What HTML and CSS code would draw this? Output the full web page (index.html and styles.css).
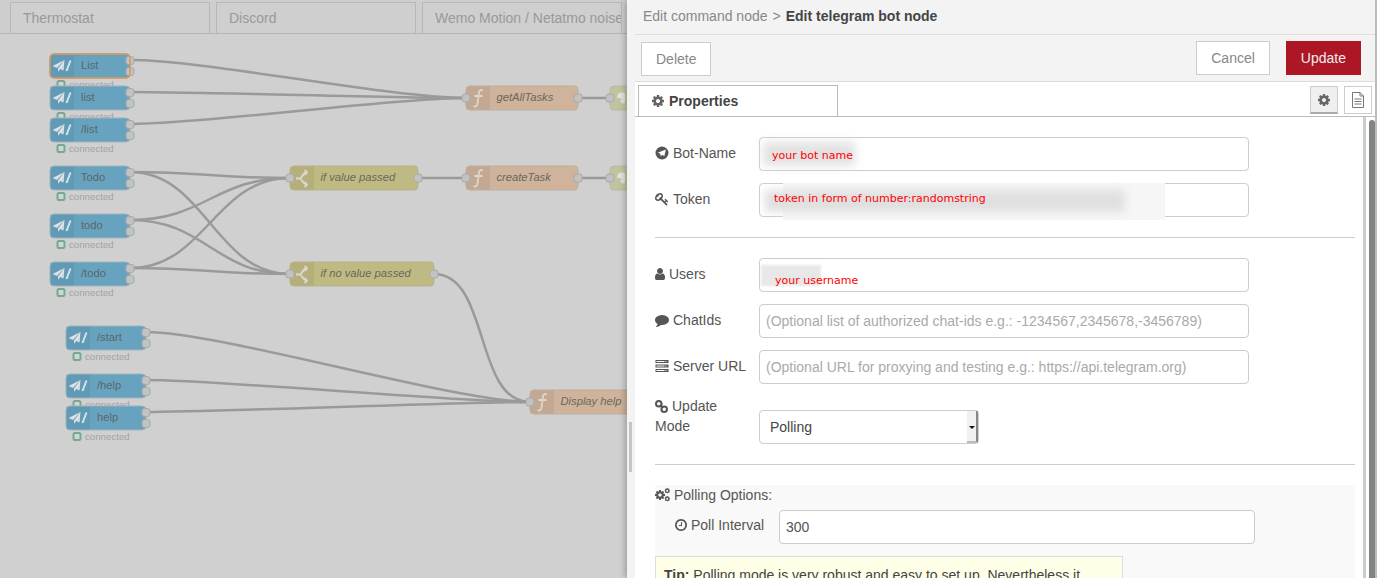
FILE: index.html
```html
<!DOCTYPE html>
<html lang="en">
<head>
  <meta charset="UTF-8">
  <meta name="viewport" content="width=device-width, initial-scale=1.0">
  <title>Edit telegram bot node</title>
  <link rel="stylesheet" href="styles.css">
</head>
<body>

<div class="workspace">
  <div class="flow-tabs">
    <div class="flow-tab">Thermostat</div>
    <div class="flow-tab">Discord</div>
    <div class="flow-tab">Wemo Motion / Netatmo noise</div>
  </div>

  <svg class="flow" width="627" height="544" viewBox="0 34 627 544">
    <defs>
      <g id="tg-node">
        <rect class="node-box tg" x="0" y="0" width="80" height="24" rx="4"/>
        <path class="node-icon-bg" d="M4 .5H24V23.500H4A3.500 3.500 0 0 1 .5 20V4A3.500 3.500 0 0 1 4 .5Z"/>
        <path class="tg-plane" d="M14.500 6 2.500 12l4.500 2zM14.500 6 8 14.500v3l2.500-2.500 3 1.500z"/>
        <path class="tg-slash" d="M20.500 6.500 16.500 17"/>
        <rect class="port" x="76" y="2.500" width="8" height="8" rx="2.500"/>
        <rect class="port" x="76" y="13.500" width="8" height="8" rx="2.500"/>
        <rect class="status-dot" x="7.500" y="27" width="7" height="7" rx="1.500"/>
        <text class="status-text" x="19" y="34">connected</text>
      </g>
      <g id="fn-icon">
        <path class="node-icon-bg" d="M4 .5H24V23.500H4A3.500 3.500 0 0 1 .5 20V4A3.500 3.500 0 0 1 4 .5Z"/>
        <path class="fn-glyph" d="M17 4.500C13.500 3 13 5.500 12.700 8.500L11.500 17.500C11.200 20.500 9.500 21 7.500 20M8.500 10H16.500"/>
      </g>
      <g id="switch-icon">
        <path class="node-icon-bg" d="M4 .5H24V23.500H4A3.500 3.500 0 0 1 .5 20V4A3.500 3.500 0 0 1 4 .5Z"/>
        <path class="fn-glyph" d="M6 12.500H10C12 12.500 12 7 16.500 6.500M10 12.500C12 12.500 12 17.500 16.500 18.500M14.500 4 17 6.500 14.500 9M14.500 16 17 18.500 14.500 21"/>
      </g>
      <path id="http-icon" class="http-globe" d="M8 8C10 6 13 6 15 7.500V17C13 18 11 17 10 15L12 13 9 12H7Z"/>
    </defs>

    <g class="wires">
      <path d="M130 60C205 60 391 98 466 98"/>
      <path d="M130 92C205 92 391 98 466 98"/>
      <path d="M130 124C205 124 391 98 466 98"/>
      <path d="M130 172C205 172 215 178 290 178"/>
      <path d="M130 172C205 172 215 274 290 274"/>
      <path d="M130 220C205 220 215 178 290 178"/>
      <path d="M130 220C205 220 215 274 290 274"/>
      <path d="M130 268C205 268 215 178 290 178"/>
      <path d="M130 268C205 268 215 274 290 274"/>
      <path d="M418 178H466"/>
      <path d="M578 178H610"/>
      <path d="M578 98H610"/>
      <path d="M434 274C490 274 474 402 530 402"/>
      <path d="M146 332C221 332 455 402 530 402"/>
      <path d="M146 380C221 380 455 402 530 402"/>
      <path d="M146 412C221 412 455 402 530 402"/>
    </g>

    <g transform="translate(50 54)">
      <use href="#tg-node"/>
      <rect class="node-selected" x="0" y="0" width="80" height="24" rx="4"/>
      <text class="node-label" x="31" y="15">List</text>
    </g>
    <g transform="translate(50 86)"><use href="#tg-node"/><text class="node-label" x="31" y="15">list</text></g>
    <g transform="translate(50 118)"><use href="#tg-node"/><text class="node-label" x="31" y="15">/list</text></g>
    <g transform="translate(50 166)"><use href="#tg-node"/><text class="node-label" x="31" y="15">Todo</text></g>
    <g transform="translate(50 214)"><use href="#tg-node"/><text class="node-label" x="31" y="15">todo</text></g>
    <g transform="translate(50 262)"><use href="#tg-node"/><text class="node-label" x="31" y="15">/todo</text></g>
    <g transform="translate(66 326)"><use href="#tg-node"/><text class="node-label" x="31" y="15">/start</text></g>
    <g transform="translate(66 374)"><use href="#tg-node"/><text class="node-label" x="31" y="15">/help</text></g>
    <g transform="translate(66 406)"><use href="#tg-node"/><text class="node-label" x="31" y="15">help</text></g>

    <g transform="translate(290 166)">
      <rect class="node-box sw" x="0" y="0" width="128" height="24" rx="4"/>
      <use href="#switch-icon"/>
      <rect class="port" x="-4" y="8" width="8" height="8" rx="2.500"/>
      <rect class="port" x="124" y="8" width="8" height="8" rx="2.500"/>
      <text class="node-label italic" x="30.500" y="15">if value passed</text>
    </g>
    <g transform="translate(290 262)">
      <rect class="node-box sw" x="0" y="0" width="144" height="24" rx="4"/>
      <use href="#switch-icon"/>
      <rect class="port" x="-4" y="8" width="8" height="8" rx="2.500"/>
      <rect class="port" x="140" y="8" width="8" height="8" rx="2.500"/>
      <text class="node-label italic" x="30.500" y="15">if no value passed</text>
    </g>
    <g transform="translate(466 86)">
      <rect class="node-box fn" x="0" y="0" width="112" height="24" rx="4"/>
      <use href="#fn-icon"/>
      <rect class="port" x="-4" y="8" width="8" height="8" rx="2.500"/>
      <rect class="port" x="108" y="8" width="8" height="8" rx="2.500"/>
      <text class="node-label italic" x="30.500" y="15">getAllTasks</text>
    </g>
    <g transform="translate(466 166)">
      <rect class="node-box fn" x="0" y="0" width="112" height="24" rx="4"/>
      <use href="#fn-icon"/>
      <rect class="port" x="-4" y="8" width="8" height="8" rx="2.500"/>
      <rect class="port" x="108" y="8" width="8" height="8" rx="2.500"/>
      <text class="node-label italic" x="30.500" y="15">createTask</text>
    </g>
    <g transform="translate(530 390)">
      <rect class="node-box fn" x="0" y="0" width="130" height="24" rx="4"/>
      <use href="#fn-icon"/>
      <rect class="port" x="-4" y="8" width="8" height="8" rx="2.500"/>
      <text class="node-label italic" x="30.500" y="15">Display help</text>
    </g>
    <g transform="translate(610 86)">
      <rect class="node-box http" x="0" y="0" width="60" height="24" rx="4"/>
      <use href="#http-icon"/>
      <rect class="port" x="-4" y="8" width="8" height="8" rx="2.500"/>
    </g>
    <g transform="translate(610 166)">
      <rect class="node-box http" x="0" y="0" width="60" height="24" rx="4"/>
      <use href="#http-icon"/>
      <rect class="port" x="-4" y="8" width="8" height="8" rx="2.500"/>
    </g>
  </svg>
</div>

<div class="tray">
  <div class="tray-handle"><div class="tray-grip"></div></div>
  <div class="tray-main">
    <div class="breadcrumb">
      <span class="crumb">Edit command node</span>
      <span class="crumb-sep">&gt;</span>
      <b class="crumb-current">Edit telegram bot node</b>
    </div>

    <div class="tray-toolbar">
      <button class="btn btn-delete">Delete</button>
      <div class="toolbar-right">
        <button class="btn">Cancel</button>
        <button class="btn btn-primary">Update</button>
      </div>
    </div>

    <div class="tabbar">
      <div class="tab">
        <svg class="tab-icon" viewBox="0 0 1792 1792"><use href="#i-cog"/></svg>
        Properties
      </div>
      <div class="tab-actions">
        <div class="tab-btn active">
          <svg class="tab-btn-icon" viewBox="0 0 1792 1792">
            <path id="i-cog" d="M1152 896q0-106-75-181t-181-75-181 75-75 181 75 181 181 75 181-75 75-181zm512-109v222q0 12-8 23t-20 13l-185 28q-19 54-39 91 35 50 107 138 10 12 10 25t-9 23q-27 37-99 108t-94 71q-12 0-26-9l-138-108q-44 23-91 38-16 136-29 186-7 28-36 28h-222q-14 0-24.500-8.500t-11.500-21.500l-28-184q-49-16-90-37l-141 107q-10 9-25 9-14 0-25-11-126-114-165-168-7-10-7-23 0-12 8-23 15-21 51-66.500t54-70.500q-27-50-41-99l-183-27q-13-2-21-12.500t-8-23.500v-222q0-12 8-23t19-13l186-28q14-46 39-92-40-57-107-138-10-12-10-24 0-10 9-23 26-36 98.500-107.500t94.500-71.500q13 0 26 10l138 107q44-23 91-38 16-136 29-186 7-28 36-28h222q14 0 24.500 8.500t11.500 21.500l28 184q49 16 90 37l142-107q9-9 24-9 13 0 25 10 129 119 165 170 7 8 7 22 0 12-8 23-15 21-51 66.500t-54 70.500q26 50 41 98l183 28q13 2 21 12.500t8 23.500z"/>
          </svg>
        </div>
        <div class="tab-btn">
          <svg class="tab-btn-doc" viewBox="0 0 14 16">
            <path d="M1.500 .5H9L12.500 4V15.500H1.500ZM9 .5V4H12.500M3.500 7H10.500M3.500 9.500H10.500M3.500 12H10.500"/>
          </svg>
        </div>
      </div>
    </div>

    <div class="tray-body">
      <div class="form">
        <div class="row">
          <label class="row-label">
            <svg class="ic" viewBox="0 0 14 14"><circle cx="7" cy="7" r="6.500"/><path class="ic-cut" d="M10.800 3.400 2.700 6.700l2.300.8.900 2.800 1.400-1.500 2 1.500z"/></svg>Bot-Name
          </label>
          <div class="field">
            <input class="input" type="text">
            <span class="smudge smudge-bot"></span>
            <span class="hint hint-bot">your bot name</span>
          </div>
        </div>
        <div class="row">
          <label class="row-label">
            <svg class="ic" viewBox="0 0 1792 1792"><path d="M832 512q0-80-56-136t-136-56-136 56-56 136q0 42 19 83-41-19-83-19-80 0-136 56t-56 136 56 136 136 56 136-56 56-136q0-42-19-83 41 19 83 19 80 0 136-56t56-136zm851 704q0 17-49 66t-66 49q-9 0-28.500-16t-36.500-33-38.500-40-24.500-26l-96 96 220 220q28 28 28 68 0 42-39 81t-81 39q-40 0-68-28l-671-671q-176 131-365 131-163 0-265.500-102.500t-102.500-265.500q0-160 95-313t248-248 313-95q163 0 265.500 102.500t102.500 265.500q0 189-131 365l355 355 96-96q-2-2-26-24.500t-40-38.500-33-36.500-16-28.500q0-17 49-66t66-49q13 0 23 10 6 6 46 44.500t82 79.500 86.500 86 73 78 28.500 41z"/></svg>Token
          </label>
          <div class="field">
            <input class="input" type="text">
            <span class="smudge smudge-token-outer"></span>
            <span class="smudge smudge-token"></span>
            <span class="hint hint-token">token in form of number:randomstring</span>
          </div>
        </div>

        <hr class="divider">

        <div class="row">
          <label class="row-label">
            <svg class="ic ic-user" viewBox="256 128 1280 1536"><path d="M1536 1399q0 109-62.500 187t-150.500 78h-854q-88 0-150.500-78t-62.500-187q0-85 8.500-160.500t31.500-152 58.500-131 94-89 134.500-34.500q131 128 313 128t313-128q76 0 134.500 34.500t94 89 58.500 131 31.500 152 8.500 160.500zm-256-887q0 159-112.500 271.500t-271.500 112.500-271.500-112.500-112.500-271.500 112.500-271.500 271.500-112.500 271.500 112.500 112.500 271.500z"/></svg>Users
          </label>
          <div class="field">
            <input class="input" type="text">
            <span class="smudge smudge-user"></span>
            <span class="hint hint-user">your username</span>
          </div>
        </div>
        <div class="row">
          <label class="row-label">
            <svg class="ic" viewBox="0 0 1792 1792"><path d="M1792 896q0 174-120 321.500t-326 233-450 85.500q-70 0-145-8-198 175-460 242-49 14-114 22-17 2-30.500-9t-17.500-29v-1q-3-4-.5-12t2-10 4.500-9.500l6-9 7-8.500 8-9q7-8 31-34.500t34.500-38 31-39.500 32.500-51 27-59 26-76q-157-89-247.500-220t-90.500-281q0-130 71-248.500t191-204.500 286-136.500 348-50.500q244 0 450 85.500t326 233 120 321.500z"/></svg>ChatIds
          </label>
          <div class="field">
            <input class="input" type="text" placeholder="(Optional list of authorized chat-ids e.g.: -1234567,2345678,-3456789)">
          </div>
        </div>
        <div class="row">
          <label class="row-label">
            <svg class="ic" viewBox="0 0 14 14"><path d="M.5 1h13v3H.5zM.5 5.500h13v3H.5zM.5 10h13v3H.5z"/><path class="ic-cut" d="M1.500 2h8v1h-8zM10.500 2h1v1h-1zM1.500 6.500h8v1h-8zM10.500 6.500h1v1h-1zM1.500 11h8v1h-8zM10.500 11h1v1h-1z"/></svg>Server URL
          </label>
          <div class="field">
            <input class="input" type="text" placeholder="(Optional URL for proxying and testing e.g.: https://api.telegram.org)">
          </div>
        </div>
        <div class="row row-mode">
          <label class="row-label label-wrap">
            <svg class="ic ic-link" viewBox="0 0 13 13"><g class="ic-ring"><circle cx="3.800" cy="3.800" r="2.800"/><circle cx="9.200" cy="9.200" r="2.800"/><path d="M5 5 8 8"/></g></svg>Update Mode
          </label>
          <div class="select-wrap">
            <select class="select">
              <option>Polling</option>
            </select>
            <span class="select-arrow"></span>
          </div>
        </div>

        <hr class="divider divider-mode">

        <div class="options">
          <div class="options-title">
            <svg class="ic ic-cogs" viewBox="0 0 15 14">
              <svg x="0" y="2" width="10" height="10" viewBox="128 128 1536 1536"><use href="#i-cog"/></svg>
              <svg x="9.500" y="0" width="5.500" height="5.500" viewBox="128 128 1536 1536"><use href="#i-cog"/></svg>
              <svg x="9.500" y="8" width="5.500" height="5.500" viewBox="128 128 1536 1536"><use href="#i-cog"/></svg>
            </svg>Polling Options:
          </div>
          <div class="poll-row">
            <label class="poll-label">
              <svg class="ic ic-clock" viewBox="128 128 1536 1536"><path d="M1024 544v448q0 14-9 23t-23 9h-320q-14 0-23-9t-9-23v-64q0-14 9-23t23-9h224v-352q0-14 9-23t23-9h64q14 0 23 9t9 23zm416 352q0-148-73-273t-198-198-273-73-273 73-198 198-73 273 73 273 198 198 273 73 273-73 198-198 73-273zm224 0q0 209-103 385.500t-279.500 279.500-385.500 103-385.500-103-279.500-279.500-103-385.500 103-385.500 279.500-279.500 385.500-103 385.500 103 279.500 279.500 103 385.500z"/></svg>Poll Interval
            </label>
            <input class="input input-poll" type="text" value="300">
          </div>
          <div class="tip"><b>Tip:</b> Polling mode is very robust and easy to set up. Nevertheless it</div>
        </div>
      </div>
      <div class="scrollbar"><div class="scroll-thumb"></div></div>
    </div>
  </div>
</div>

</body>
</html>
```

FILE: styles.css
```css
* {
  box-sizing: border-box;
}

body {
  margin: 0;
  height: 578px;
  overflow: hidden;
  position: relative;
  font-family: 'Liberation Sans', Arial, sans-serif;
  font-size: 14px;
  color: #555;
  background-color: #d0d0d0;
}

/* dimmed workspace behind the tray */
.workspace {
  height: 578px;
  overflow: hidden;
}

.flow-tabs {
  display: flex;
  gap: 6px;
  height: 34px;
  padding: 2px 0 0 10px;
  border-bottom: 1px solid #b4b4b4;
  background-color: #cecece;
}

.flow-tab {
  flex: 0 0 200px;
  padding: 0 12px;
  line-height: 31px;
  color: #999;
  white-space: nowrap;
  overflow: hidden;
  background-color: #cfcfcf;
  border: 1px solid #b8b8b8;
  border-bottom: none;
}

.flow {
  display: block;
}

.wires path {
  fill: none;
  stroke: #9a9a9a;
  stroke-width: 2.500;
}

.node-box {
  stroke: #b0b0b0;
  stroke-width: 1;
}

.node-box.tg { fill: #67a3bf; stroke: #9fb4be; }
.node-box.sw { fill: #bfba82; stroke: #b5b28e; }
.node-box.fn { fill: #cfb39a; stroke: #bcaea0; }
.node-box.http { fill: #c4c3a0; stroke: #b8b8a4; }

.node-selected {
  fill: none;
  stroke: #d4975a;
  stroke-width: 1.500;
}

.node-icon-bg {
  fill: rgba(0, 0, 0, 0.05);
}

.tg-plane {
  fill: #d6e2e8;
}

.tg-slash {
  fill: none;
  stroke: #d6e2e8;
  stroke-width: 2;
}

.fn-glyph {
  fill: none;
  stroke: #dcd8d0;
  stroke-width: 1.800;
}

.http-globe {
  fill: #e2e2da;
}

.port {
  fill: #c2c2c2;
  stroke: #a8a8a8;
  stroke-width: 1;
}

.status-dot {
  fill: #d4d4d4;
  stroke: #74ab8e;
  stroke-width: 2;
}

.status-text {
  font-size: 9.700px;
  fill: #a2a2a2;
}

.node-label {
  font-size: 11.200px;
  fill: #5c666b;
}

.node-label.italic {
  font-style: italic;
  fill: #6b675c;
}

/* edit tray */
.tray {
  position: absolute;
  top: 0;
  left: 627px;
  width: 750px;
  height: 578px;
  display: flex;
  box-shadow: -2px 0 6px rgba(0, 0, 0, 0.25);
}

.tray-handle {
  flex: 0 0 8px;
  background-color: #f3f3f3;
  padding-top: 422px;
}

.tray-grip {
  width: 3px;
  height: 50px;
  margin-left: 2px;
  background-color: #c4c4c4;
}

.tray-main {
  flex: 1;
  display: flex;
  flex-direction: column;
  background-color: #fff;
  border-right: 2px solid #bbb;
  min-width: 0;
}

.breadcrumb {
  flex: 0 0 35px;
  display: flex;
  align-items: center;
  gap: 5px;
  padding: 0 0 3px 8px;
  background-color: #f3f3f3;
  border-bottom: 1px solid #ddd;
}

.crumb, .crumb-sep {
  color: #888;
}

.crumb-current {
  color: #444;
}

.tray-toolbar {
  flex: 0 0 47px;
  display: flex;
  justify-content: space-between;
  padding: 6px 14px 0 6px;
  background-color: #f3f3f3;
  border-bottom: 1px solid #ddd;
}

.toolbar-right {
  display: flex;
  gap: 16px;
}

.btn {
  height: 34px;
  padding: 0 14px;
  font-family: inherit;
  font-size: 14px;
  color: #888;
  background-color: #fff;
  border: 1px solid #ccc;
}

.btn-delete {
  margin-top: 1px;
}

.btn-primary {
  color: #eee;
  background-color: #ad1625;
  border-color: #ad1625;
}

.tabbar {
  flex: 0 0 35px;
  display: flex;
  justify-content: space-between;
  padding: 3px 3px 0 3px;
  border-bottom: 1px solid #bbb;
}

.tab {
  width: 200px;
  height: 31px;
  padding-left: 12px;
  display: flex;
  align-items: center;
  gap: 4px;
  font-weight: bold;
  color: #444;
  background-color: #fff;
  border: 1px solid #bbb;
  border-bottom: none;
}

.tab-icon {
  width: 14px;
  height: 14px;
  fill: #666;
}

.tab-actions {
  display: flex;
  gap: 6px;
  height: 28px;
  margin-top: 1px;
}

.tab-btn {
  width: 28px;
  height: 28px;
  display: flex;
  align-items: center;
  justify-content: center;
  border: 1px solid #ccc;
}

.tab-btn.active {
  background-color: #efefef;
  border-bottom: 2px solid #aaa;
}

.tab-btn-icon {
  width: 14px;
  height: 14px;
  fill: #666;
}

.tab-btn-doc {
  width: 14px;
  height: 16px;
  fill: none;
  stroke: #777;
  stroke-width: 1;
}

.tray-body {
  flex: 1;
  position: relative;
  overflow: hidden;
  padding: 20px 20px 0 20px;
}

.scrollbar {
  position: absolute;
  top: 0;
  right: 0;
  bottom: 0;
  width: 12px;
  padding: 3px 3px 0 3px;
  border-left: 3px solid #ccc;
}

.scroll-thumb {
  width: 6px;
  height: 480px;
  border-radius: 3px;
  background-color: #808484;
}

.row {
  display: flex;
  margin-bottom: 12px;
}

.row-label {
  flex: 0 0 104px;
  padding-top: 6px;
  line-height: 20px;
  white-space: nowrap;
}

.label-wrap {
  padding-top: 0;
  white-space: normal;
  padding-right: 30px;
}

.ic {
  width: 14px;
  height: 14px;
  margin-right: 4px;
  vertical-align: -2px;
  fill: #555;
}

.ic-cut {
  fill: #fff;
}

.ic-user {
  width: 10px;
}

.ic-link {
  width: 13px;
  height: 13px;
  margin-right: 4px;
}

.ic-ring {
  fill: none;
  stroke: #555;
  stroke-width: 2;
}

.ic-cogs {
  width: 15px;
}

.ic-clock {
  width: 12px;
  height: 12px;
  vertical-align: -1px;
}

.field {
  position: relative;
  flex: 0 0 490px;
}

.input {
  display: block;
  width: 100%;
  height: 34px;
  padding: 0 6px;
  font-family: inherit;
  font-size: 14px;
  color: #555;
  background-color: #fff;
  border: 1px solid #ccc;
  border-radius: 4px;
  outline: none;
}

.input::placeholder {
  color: #aaa;
}

/* blurred-out values and the red notes written over them */
.smudge {
  position: absolute;
  pointer-events: none;
}

.smudge-bot {
  left: 4px;
  top: 5px;
  width: 92px;
  height: 24px;
  background-color: #e2e2e2;
  filter: blur(5px);
}

.smudge-token-outer {
  left: 24px;
  top: 0;
  width: 382px;
  height: 37px;
  background-color: #f6f6f6;
}

.smudge-token {
  left: 6px;
  top: 7px;
  width: 360px;
  height: 22px;
  background-color: #e0e0e0;
  filter: blur(4px);
}

.smudge-user {
  left: 2px;
  top: 7px;
  width: 60px;
  height: 21px;
  background-color: #e8e8e8;
  filter: blur(1px);
}

.hint {
  position: absolute;
  font-family: 'DejaVu Sans', sans-serif;
  font-size: 11px;
  line-height: 13px;
  color: #f00;
  white-space: nowrap;
}

.hint-bot { left: 13px; top: 12px; }
.hint-token { left: 15px; top: 9px; }
.hint-user { left: 16px; top: 16px; }

.divider {
  height: 1px;
  margin: 20px 0;
  border: none;
  background-color: #ccc;
}

.divider-mode {
  margin-top: 20px;
}

.row-mode {
  margin-bottom: 0;
}

.select-wrap {
  position: relative;
  width: 220px;
  height: 34px;
  margin-top: 14px;
}

.select {
  display: block;
  width: 100%;
  height: 34px;
  padding: 0 10px;
  appearance: none;
  font-family: inherit;
  font-size: 14px;
  color: #444;
  background-color: #fff;
  border: 1px solid #ccc;
  border-radius: 4px;
}

.select-arrow {
  position: absolute;
  top: 1px;
  right: 1px;
  width: 11px;
  height: 32px;
  background-color: #f0f0f0;
  border-right: 2px solid #888;
  border-bottom: 2px solid #bbb;
}

.select-arrow::after {
  content: "";
  position: absolute;
  left: 2px;
  top: 15px;
  border-left: 3px solid transparent;
  border-right: 3px solid transparent;
  border-top: 3px solid #111;
}

.options {
  background-color: #f9f9f9;
}

.options-title {
  line-height: 20px;
}

.poll-row {
  display: flex;
  margin-top: 5px;
  padding-left: 20px;
}

.poll-label {
  flex: 0 0 104px;
  padding-top: 5px;
  line-height: 20px;
}

.input-poll {
  flex: 0 0 476px;
  width: 476px;
}

.tip {
  width: 468px;
  margin-top: 12px;
  padding: 8px;
  line-height: 20px;
  color: #444;
  background-color: #ffffe8;
  border: 1px solid #ddd;
}
```
